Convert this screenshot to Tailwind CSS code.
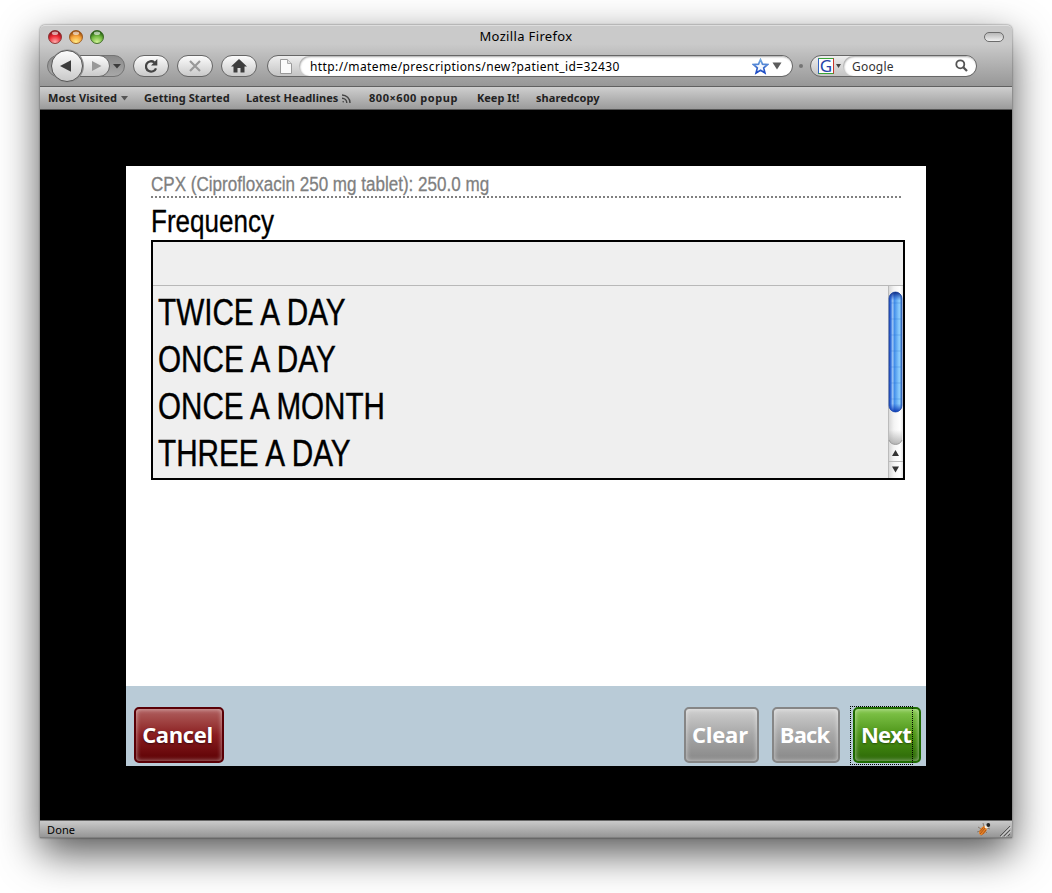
<!DOCTYPE html>
<html lang="en">
<head>
<meta charset="utf-8">
<title>Mozilla Firefox</title>
<script src="https://cdn.jsdelivr.net/npm/@tailwindcss/browser@4"></script>
</head>
<body class="bg-white w-[1052px] h-[893px] overflow-hidden font-['Noto_Sans',sans-serif] text-black">
<div class="pt-[25px] pl-10">
<div class="w-[972px] h-[813px] flex flex-col rounded-t-[5px] bg-[#c8c8c8] shadow-[0_0_2px_rgba(0,0,0,0.6),0_15px_40px_rgba(0,0,0,0.68)]">

  <!-- Title bar and navigation -->
  <header class="h-[62px] rounded-t-[5px] bg-linear-to-b from-[#cacaca] from-30% to-[#979797] border-t border-t-[#dedede] border-b border-b-[#606060]">
    <div class="h-[21px] flex items-center justify-between pl-2 pr-2">
      <div class="flex gap-[7px] w-[100px]">
        <svg width="14" height="14" viewBox="0 0 14 14"><defs>
          <radialGradient id="r" cx=".5" cy=".9" r=".8"><stop offset="0" stop-color="#ffb0b0"/><stop offset=".6" stop-color="#ee2b35"/><stop offset="1" stop-color="#8a1018"/></radialGradient>
          <radialGradient id="y" cx=".5" cy=".9" r=".8"><stop offset="0" stop-color="#fff08a"/><stop offset=".6" stop-color="#f6a33a"/><stop offset="1" stop-color="#9a4a08"/></radialGradient>
          <radialGradient id="g" cx=".5" cy=".9" r=".8"><stop offset="0" stop-color="#d4f59a"/><stop offset=".6" stop-color="#72b840"/><stop offset="1" stop-color="#225c10"/></radialGradient></defs>
          <circle cx="7" cy="7" r="6.5" fill="url(#r)" stroke="#86302f" stroke-width=".9"/><ellipse cx="7" cy="3.3" rx="3.2" ry="1.8" fill="#fff" opacity=".6"/></svg>
        <svg width="14" height="14" viewBox="0 0 14 14"><circle cx="7" cy="7" r="6.5" fill="url(#y)" stroke="#95561c" stroke-width=".9"/><ellipse cx="7" cy="3.3" rx="3.2" ry="1.8" fill="#fff" opacity=".6"/></svg>
        <svg width="14" height="14" viewBox="0 0 14 14"><circle cx="7" cy="7" r="6.5" fill="url(#g)" stroke="#35641f" stroke-width=".9"/><ellipse cx="7" cy="3.3" rx="3.2" ry="1.8" fill="#fff" opacity=".6"/></svg>
      </div>
      <div class="text-[13px] leading-[21px] tracking-[0.35px]">Mozilla Firefox</div>
      <div class="w-[100px] flex justify-end"><div class="w-5 h-[10px] rounded-full border border-[#6c6c6c] bg-linear-to-b from-[#b8b8b8] to-[#f0f0f0]"></div></div>
    </div>

    <div class="h-[38px] flex items-center pl-[7px]">
      <svg class="shrink-0" width="78" height="34" viewBox="0 0 78 34">
        <defs><linearGradient id="b" x2="0" y2="1"><stop offset="0" stop-color="#fdfdfd"/><stop offset="1" stop-color="#c8c8c8"/></linearGradient>
        <linearGradient id="d" x2="0" y2="1"><stop offset="0" stop-color="#8a8a8a"/><stop offset="1" stop-color="#a8a8a8"/></linearGradient></defs>
        <rect x=".5" y="6.5" width="77" height="21" rx="10.500" fill="url(#d)" stroke="#747474"/>
        <path d="M30 6.500H52a10.500 10.500 0 0 1 0 21H30z" fill="url(#b)" stroke="#666"/>
        <circle cx="20.500" cy="17" r="16.500" fill="#929292"/>
        <circle cx="20" cy="17" r="15.500" fill="url(#b)" stroke="#565656"/>
        <path d="M13 17l11-5.800v11.600z" fill="#3c3c3c"/>
        <path d="M54.500 17l-9.500-5v10z" fill="#999"/>
        <path d="M66 15h8l-4 4.500z" fill="#3c3c3c"/>
      </svg>
      <div class="ml-2 w-9 h-[22px] shrink-0 rounded-full border border-[#666] bg-linear-to-b from-[#fcfcfc] to-[#cacaca] flex items-center justify-center">
        <svg width="16" height="16" viewBox="0 0 16 16"><path d="M13 10.300A5.200 5.200 0 1 1 11.300 4.300" fill="none" stroke="#444" stroke-width="2.300"/><path d="M14.300 1v6.500H8z" fill="#444"/></svg>
      </div>
      <div class="ml-2 w-9 h-[22px] shrink-0 rounded-full border border-[#666] bg-linear-to-b from-[#fcfcfc] to-[#cacaca] flex items-center justify-center">
        <svg width="12" height="12" viewBox="0 0 12 12"><path d="M1 1l10 10M11 1L1 11" stroke="#999" stroke-width="2.200"/></svg>
      </div>
      <div class="ml-2 w-9 h-[22px] shrink-0 rounded-full border border-[#666] bg-linear-to-b from-[#fcfcfc] to-[#cacaca] flex items-center justify-center">
        <svg width="16" height="14" viewBox="0 0 16 14"><path d="M8 0l8 7.500h-2.500V13.500H9.500V9h-3v4.500H2.500V7.500H0z" fill="#3d3d3d"/></svg>
      </div>
      <!-- Address field -->
      <div class="ml-[10px] w-[526px] h-[22px] shrink-0 rounded-full border border-[#666] bg-linear-to-b from-[#eee] to-[#c4c4c4] flex items-center overflow-hidden">
        <svg class="ml-3 mr-[7px] shrink-0" width="12" height="15" viewBox="0 0 12 15"><path d="M.5.500h7l4 4v10H.5z" fill="#fafafa" stroke="#999"/><path d="M7.500.500v4h4" fill="#e0e0e0" stroke="#aaa"/></svg>
        <div class="flex-1 h-5 rounded-full bg-white shadow-[inset_1px_1px_2px_rgba(0,0,0,0.35)] flex items-center pl-[11px] pr-[10px]">
          <span class="flex-1 pt-px text-[12px] leading-5 tracking-[0.39px] whitespace-nowrap">http://mateme/prescriptions/new?patient_id=32430</span>
          <svg width="17" height="17" viewBox="0 0 17 17"><defs><linearGradient id="s" x2="0" y2="1"><stop offset="0" stop-color="#74aadf"/><stop offset="1" stop-color="#1a48c4"/></linearGradient></defs><path d="M8.500 1.600l2 4.600 5 .4-3.800 3.300 1.200 5-4.400-2.700-4.400 2.700 1.200-5L1.500 6.600l5-.4z" fill="#f4f8fd" stroke="url(#s)" stroke-width="1.700"/></svg>
          <svg class="ml-[3px]" width="10" height="8" viewBox="0 0 10 8"><path d="M.5.500h9L5 7.500z" fill="#5c5c5c"/></svg>
        </div>
      </div>
      <div class="ml-[6px] w-1 h-1 rounded-full bg-[#747474]"></div>
      <!-- Search field -->
      <div class="ml-[7px] w-[167px] h-[22px] shrink-0 rounded-full border border-[#666] bg-linear-to-b from-[#eee] to-[#c4c4c4] flex items-center overflow-hidden">
        <div class="ml-[7px] w-4 h-4 shrink-0 bg-white border border-t-[#3aa335] border-b-[#3aa335] border-l-[#3364c4] border-r-[#c8352c] flex items-center justify-center text-[17px] leading-[14px] text-[#2744a8]">G</div>
        <svg class="ml-[2px] shrink-0" width="5" height="4" viewBox="0 0 5 4"><path d="M0 0h5L2.500 4z" fill="#444"/></svg>
        <div class="ml-[2px] flex-1 h-5 rounded-full bg-white shadow-[inset_1px_1px_2px_rgba(0,0,0,0.35)] flex items-center justify-between pl-[9px] pr-[8px]">
          <span class="pt-px text-[12px] leading-5 tracking-[0.2px] text-[#333]">Google</span>
          <svg class="mb-[2px]" width="13" height="13" viewBox="0 0 13 13"><circle cx="5.300" cy="5.300" r="4" fill="none" stroke="#555" stroke-width="1.800"/><path d="M8.300 8.300l3.700 3.700" stroke="#555" stroke-width="2.300"/></svg>
        </div>
      </div>
    </div>
  </header>

  <!-- Bookmarks -->
  <nav class="h-[23px] bg-linear-to-b from-[#cfcfcf] to-[#9b9b9b] border-b border-b-[#555] flex items-center pl-2 text-[11px] leading-[22px] font-bold text-[#222] whitespace-nowrap">
    <span class="w-[96px] flex items-center gap-1"><span class="tracking-[0.1px]">Most Visited</span><svg width="7" height="5" viewBox="0 0 7 5"><path d="M0 0h7L3.500 4.500z" fill="#555"/></svg></span>
    <span class="w-[102px] tracking-[0.05px]">Getting Started</span>
    <span class="w-[123px] flex items-center gap-1"><span class="tracking-[0.05px]">Latest Headlines</span><svg width="9" height="9" viewBox="0 0 9 9" fill="none" stroke="#444" stroke-width="1.400"><path d="M0 1a8 8 0 0 1 8 8M0 4.200A4.800 4.800 0 0 1 4.800 9"/><circle cx="1.200" cy="7.800" r=".8" fill="#444" stroke="none"/></svg></span>
    <span class="w-[108px] tracking-[0.55px]">800×600 popup</span>
    <span class="w-[59px]">Keep It!</span>
    <span class="tracking-[0.05px]">sharedcopy</span>
  </nav>

  <!-- Page -->
  <main class="flex-1 bg-black pt-14 pl-[86px] font-['Liberation_Sans',Arial,sans-serif]">
    <div class="w-[800px] h-[600px] bg-white flex flex-col">
      <div class="flex-1 pl-[25px] whitespace-nowrap">
        <div class="w-[750px] h-8 border-b-2 border-dotted border-[#808080] pt-[6px] text-[20px] leading-6 text-[#808080] [-webkit-text-stroke:0.3px_#808080]"><div class="origin-left scale-x-[0.852] w-fit">CPX (Ciprofloxacin 250 mg tablet): 250.0 mg</div></div>
        <h1 class="h-[42px] pt-[7px] text-[31px] leading-[34px] [-webkit-text-stroke:0.3px_black]"><span class="inline-block origin-left scale-x-[0.84]">Frequency</span></h1>
        <div class="w-[754px] h-[240px] border-2 border-black bg-[#efefef] flex flex-col">
          <div class="h-[44px] border-b border-[#b8b8b8]"></div>
          <div class="flex-1 flex justify-between">
            <ul class="pl-[5px] pt-[3px] text-[36px] leading-[47px] [-webkit-text-stroke:0.4px_black]">
              <li class="h-[47px] origin-left scale-x-[0.825] w-fit">TWICE A DAY</li>
              <li class="h-[47px] origin-left scale-x-[0.825] w-fit">ONCE A DAY</li>
              <li class="h-[47px] origin-left scale-x-[0.822] w-fit">ONCE A MONTH</li>
              <li class="h-[47px] origin-left scale-x-[0.825] w-fit">THREE A DAY</li>
            </ul>
            <svg width="15" height="192" viewBox="0 0 15 192">
              <defs>
                <linearGradient id="t"><stop offset="0" stop-color="#d4d4d4"/><stop offset=".4" stop-color="#f4f4f4"/><stop offset=".8" stop-color="#fff"/><stop offset="1" stop-color="#e4e4e4"/></linearGradient>
                <linearGradient id="w" x2="0" y2="1"><stop offset="0" stop-color="#888" stop-opacity="0"/><stop offset="1" stop-color="#888" stop-opacity=".6"/></linearGradient>
                <linearGradient id="u"><stop offset="0" stop-color="#1638b0"/><stop offset=".15" stop-color="#3a78e0"/><stop offset=".28" stop-color="#9cc4f4"/><stop offset=".42" stop-color="#4590ea"/><stop offset=".8" stop-color="#8fd0ff"/><stop offset="1" stop-color="#2860b8"/></linearGradient>
                <linearGradient id="v" x2="0" y2="1"><stop offset="0" stop-color="#0c2a80"/><stop offset=".07" stop-color="#1848c0" stop-opacity="0"/><stop offset=".93" stop-color="#1848c0" stop-opacity="0"/><stop offset="1" stop-color="#0c38b0"/></linearGradient>
                <pattern id="p" width="14" height="16" patternUnits="userSpaceOnUse"><rect width="14" height="2" fill="#2468d0" opacity=".15"/></pattern>
              </defs>
              <rect width="15" height="192" fill="url(#t)"/>
              <rect width="1" height="192" fill="#bbb"/>
              <path d="M1 142v10a7 7 0 0 0 13 0v-10z" transform="translate(0 2)" fill="url(#w)"/>
              <path d="M1 153a7 7 0 0 0 13 0" transform="translate(0 1)" fill="none" stroke="#999"/>
              <rect x="1" y="6" width="13" height="120" rx="6.500" fill="url(#u)" stroke="#2a54a8" stroke-width=".8"/>
              <rect x="1" y="6" width="13" height="120" rx="6.500" fill="url(#p)"/>
              <rect x="1" y="6" width="13" height="120" rx="6.500" fill="url(#v)"/>
              <path d="M1 175.500h14" stroke="#bbb"/>
              <path d="M4 170h7l-3.500-6zM4 180.500h7l-3.500 6z" fill="#333"/>
            </svg>
          </div>
        </div>
      </div>
      <!-- Action buttons -->
      <footer class="h-20 bg-[#b9cbd7] flex items-start pt-[21px] pl-2 pr-[5px] font-['Open_Sans','Noto_Sans',sans-serif] font-bold text-[22px] leading-[50px] text-white">
        <button class="w-[90px] h-14 pb-[2px] pr-[3px] rounded-[5px] border-2 border-[#5a0006] bg-linear-to-b from-[#b06060] via-[#8b1c20] via-50% to-[#5c0204] shadow-[inset_0_0_5px_rgba(255,255,255,0.6)] text-shadow-[0_1px_2px_rgba(0,0,0,0.5)] tracking-[-0.35px]">Cancel</button>
        <button class="ml-auto w-[75px] h-14 pb-[2px] pr-[3px] rounded-[5px] border-2 border-[#868686] bg-linear-to-b from-[#cfcfcf] via-[#a6a6a6] via-50% to-[#888] shadow-[inset_0_0_5px_rgba(255,255,255,0.6)] tracking-[-0.2px]">Clear</button>
        <button class="ml-[13px] w-[68px] h-14 pb-[2px] pr-[3px] rounded-[5px] border-2 border-[#868686] bg-linear-to-b from-[#cfcfcf] via-[#a6a6a6] via-50% to-[#888] shadow-[inset_0_0_5px_rgba(255,255,255,0.6)] tracking-[-0.9px]">Back</button>
        <button class="relative ml-[13px] w-[68px] h-14 pb-[2px] pr-[2px] rounded-[5px] border-2 border-[#1e6a00] bg-linear-to-b from-[#84c84c] via-[#4c9414] via-50% to-[#2c6808] shadow-[inset_0_0_5px_rgba(255,255,255,0.6)] text-shadow-[0_1px_2px_rgba(0,0,0,0.4)] tracking-[-0.8px]">Next<span class="absolute -left-[5px] -top-[3px] w-[63px] h-[59px] border border-dotted border-black"></span></button>
      </footer>
    </div>
  </main>

  <!-- Status bar -->
  <div class="h-[18px] border-t border-t-[#666] border-b border-b-[#808080] bg-linear-to-b from-[#cacaca] to-[#969696] flex items-center justify-between pl-[7px] text-[11px] leading-[17px]">
    <span class="pt-px tracking-[0.1px]">Done</span>
    <span class="flex items-center gap-2">
      <svg width="15" height="15" viewBox="0 0 15 15"><path d="M2 5l3 2M1 10l3-1M5 14l1-3M7 1l1 4M11 11l-2-2M14 7l-3-1" stroke="#857a70"/><ellipse cx="7" cy="8.500" rx="3" ry="5.200" transform="rotate(38 7 8.500)" fill="#e98124"/><path d="M9 6l-5 6M7.500 5.500L4 9.500M10 8l-3.500 4.500" stroke="#8a4314" stroke-width=".7"/><circle cx="10.500" cy="4.800" r="1.800" fill="#f4f0e4"/><circle cx="12.300" cy="3" r="1.900" fill="#222"/></svg>
      <svg class="mt-1" width="13" height="13" viewBox="0 0 13 13"><path d="M1 11L11 1M5 11l6-6M9 11l2-2" stroke="#555"/><path d="M2 12L12 2M6 12l6-6" stroke="#ddd" stroke-width=".7"/></svg>
    </span>
  </div>
</div>
</div>
</body>
</html>
